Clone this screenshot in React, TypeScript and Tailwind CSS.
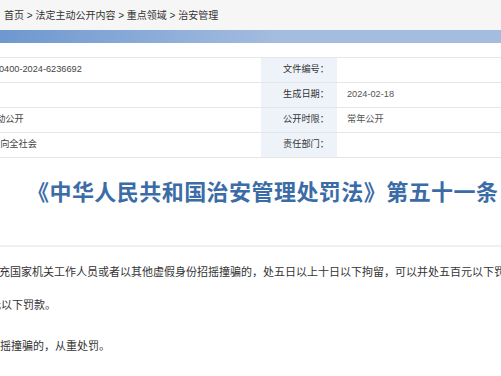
import React from 'react';

const rows = [
  { left: '0400-2024-6236692', leftOffset: '-ml-[1px]', label: '文件编号', value: '' },
  { left: '', leftOffset: '', label: '生成日期', value: '2024-02-18' },
  { left: '主动公开', leftOffset: '-ml-[13px]', label: '公开时限', value: '常年公开' },
  { left: '面向全社会', leftOffset: '-ml-[9px]', label: '责任部门', value: '' },
];

export default function App() {
  return (
    <div
      className="w-[501px] h-[376px] overflow-hidden bg-white text-[#333]"
      style={{ fontFamily: '"Liberation Sans", "Noto Sans CJK SC", sans-serif' }}
    >
      {/* breadcrumb */}
      <div className="h-[30px] bg-[#f6f6f6] flex items-center pl-[4px] text-[10px] whitespace-nowrap">
        首页 &gt; 法定主动公开内容 &gt; 重点领域 &gt; 治安管理
      </div>
      <div className="h-[13px] bg-[linear-gradient(to_right,#6e98cf,#a3bcdf_55%,#a3bcdf)]" />

      {/* info table */}
      <div className="mt-[14px] border-t border-[#e6e6e6]">
        {rows.map((r) => (
          <div key={r.label} className="flex h-[25px] border-b border-[#e6e6e6] text-[9.2px] whitespace-nowrap">
            <div className="w-[261px] flex items-center overflow-hidden text-[#444]">
              <span className={r.leftOffset}>{r.left}</span>
            </div>
            <div className="w-[76px] bg-[#eef3fa] flex items-center justify-end pr-[8px] text-[#333]">
              {r.label}：
            </div>
            <div className="flex-1 flex items-center pl-[10px] text-[#555]">{r.value}</div>
          </div>
        ))}
      </div>

      {/* title */}
      <div className="pt-[20px] pb-[37px] border-b-2 border-[#f0f0f0] whitespace-nowrap">
        <h1 className="ml-[27px] text-[22px] leading-[30px] tracking-[0.45px] font-bold text-[#3b6ca6]">
          《中华人民共和国治安管理处罚法》第五十一条
        </h1>
      </div>

      {/* body */}
      <div className="pt-[9px] text-[11px] leading-[33px] text-[#333] whitespace-nowrap">
        <div className="-ml-[12px]">
          冒充国家机关工作人员或者以其他虚假身份招摇撞骗的，处五日以上十日以下拘留，可以并处五百元以下罚款；情节较轻的，处五日以下拘留或者五百元以下罚款。
        </div>
        <div className="-ml-[10px]">元以下罚款。</div>
        <div className="mt-[8px] -ml-[11px]">招摇撞骗的，从重处罚。</div>
      </div>
    </div>
  );
}
